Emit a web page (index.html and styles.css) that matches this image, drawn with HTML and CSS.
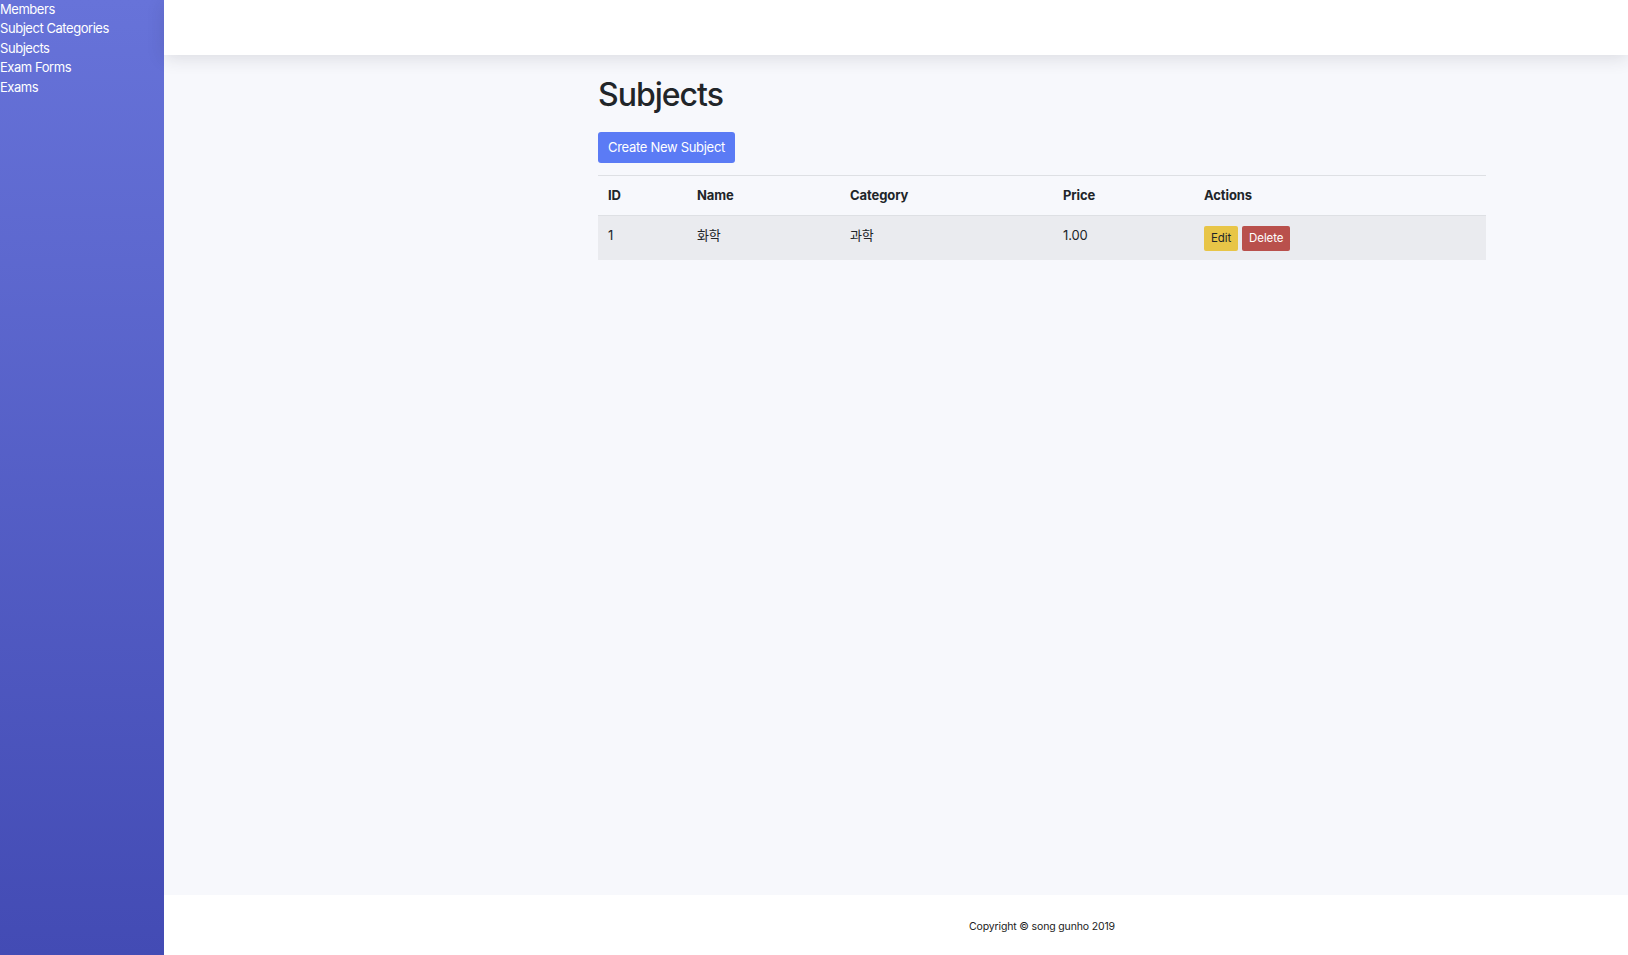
FILE: index.html
```html
<!DOCTYPE html>
<html lang="en">
<head>
<meta charset="utf-8">
<title>Subjects</title>
<link rel="stylesheet" href="styles.css">
</head>
<body>
<div class="layout">
  <nav class="sidebar">
    <a href="#">Members</a>
    <a href="#">Subject Categories</a>
    <a href="#">Subjects</a>
    <a href="#">Exam Forms</a>
    <a href="#">Exams</a>
  </nav>
  <div class="main">
    <header class="topbar"></header>
    <div class="content">
      <div class="container">
        <h1 class="title">Subjects</h1>
        <a href="#" class="btn btn-primary">Create New Subject</a>
        <table class="table">
          <colgroup>
            <col class="c-id"><col class="c-name"><col class="c-cat"><col class="c-price"><col>
          </colgroup>
          <thead>
            <tr><th>ID</th><th>Name</th><th>Category</th><th>Price</th><th>Actions</th></tr>
          </thead>
          <tbody>
            <tr>
              <td>1</td><td>화학</td><td>과학</td><td>1.00</td>
              <td class="actions"><a href="#" class="btn-sm btn-edit">Edit</a><a href="#" class="btn-sm btn-delete">Delete</a></td>
            </tr>
          </tbody>
        </table>
      </div>
    </div>
    <footer class="footer"><span>Copyright © song gunho 2019</span></footer>
  </div>
</div>
</body>
</html>
```

FILE: styles.css
```css
* { box-sizing: border-box; }
html, body { margin: 0; padding: 0; height: 100%; }
body {
  font-family: Inter, "Noto Sans", "Noto Sans CJK KR", sans-serif;
  color: #212529;
  background: #f7f8fc;
}
a { text-decoration: none; }
.layout { display: flex; height: 955px; }
.sidebar {
  width: 164px;
  flex: 0 0 164px;
  background: linear-gradient(180deg, #6773d9 0%, #434bb4 100%);
  display: flex;
  flex-direction: column;
}
.sidebar a {
  color: #ffffff;
  font-size: 13px;
  line-height: 19.4px;
  letter-spacing: -0.45px;
}
.main {
  flex: 1;
  display: flex;
  flex-direction: column;
  background: #f7f8fc;
  min-width: 0;
}
.topbar {
  height: 55px;
  background: #ffffff;
  box-shadow: 0 3px 18px rgba(40, 42, 60, 0.14);
  position: relative;
  z-index: 1;
}
.content {
  flex: 1;
  padding-left: 292px;
}
.container {
  width: 888px;
  margin: 0 auto;
  padding-top: 20px;
}
.title {
  font-size: 32px;
  font-weight: 500;
  margin: 0 0 17px 0;
  line-height: 40px;
  letter-spacing: -1px;
}
.btn {
  display: inline-block;
  font-size: 13px;
  line-height: 31px;
  height: 31px;
  padding: 0 10px;
  border-radius: 3px;
  letter-spacing: -0.3px;
}
.btn-primary { background: #5b7bf5; color: #fff; }
.table {
  width: 100%;
  border-collapse: collapse;
  margin-top: 12px;
  border-top: 1px solid #dee0e4;
  font-size: 13px;
  letter-spacing: -0.1px;
}
.c-id { width: 89px; }
.c-name { width: 153px; }
.c-cat { width: 213px; }
.c-price { width: 141px; }
.table th {
  text-align: left;
  font-weight: 700;
  padding: 9px 10px 11px;
  height: 40px;
  border-bottom: 1px solid #dee0e4;
}
.table td {
  padding: 11px 10px 9px;
  vertical-align: top;
  height: 44px;
  line-height: 17px;
}
.table tbody tr { background: #eaebef; }
.table td.actions { padding-top: 10px; }
.btn-sm {
  display: inline-block;
  font-size: 11.5px;
  height: 25px;
  line-height: 25px;
  padding: 0 7px;
  border-radius: 2px;
  margin-right: 4px;
  letter-spacing: -0.1px;
}
.btn-edit { background: #e8c547; color: #212529; }
.btn-delete { background: #b9504c; color: #ffffff; }
.footer {
  height: 60px;
  background: #ffffff;
  padding-left: 292px;
  padding-top: 2px;
  display: flex;
  align-items: center;
  justify-content: center;
  font-size: 10.5px;
  letter-spacing: -0.15px;
  color: #222;
}
```
